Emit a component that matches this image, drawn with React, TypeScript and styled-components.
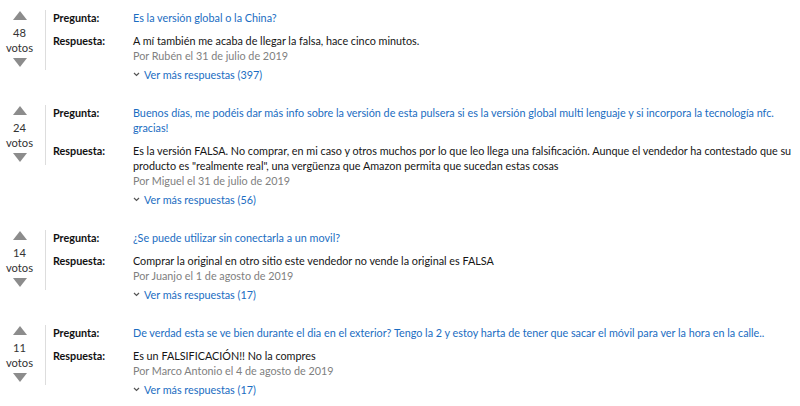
import * as React from 'react'
import styled, { createGlobalStyle } from 'styled-components'

interface Entry {
  votes: number
  question: string
  answer: string
  author: string
  date: string
  more: number
}

const entries: Entry[] = [
  {
    votes: 48,
    question: 'Es la versión global o la China?',
    answer: 'A mí también me acaba de llegar la falsa, hace cinco minutos.',
    author: 'Rubén',
    date: '31 de julio de 2019',
    more: 397,
  },
  {
    votes: 24,
    question:
      'Buenos días, me podéis dar más info sobre la versión de esta pulsera si es la versión global multi lenguaje y si incorpora la tecnología nfc. gracias!',
    answer:
      'Es la versión FALSA. No comprar, en mi caso y otros muchos por lo que leo llega una falsificación. Aunque el vendedor ha contestado que su producto es "realmente real", una vergüenza que Amazon permita que sucedan estas cosas',
    author: 'Miguel',
    date: '31 de julio de 2019',
    more: 56,
  },
  {
    votes: 14,
    question: '¿Se puede utilizar sin conectarla a un movil?',
    answer: 'Comprar la original en otro sitio este vendedor no vende la original es FALSA',
    author: 'Juanjo',
    date: '1 de agosto de 2019',
    more: 17,
  },
  {
    votes: 11,
    question:
      'De verdad esta se ve bien durante el dia en el exterior? Tengo la 2 y estoy harta de tener que sacar el móvil para ver la hora en la calle..',
    answer: 'Es un FALSIFICACIÓN!! No la compres',
    author: 'Marco Antonio',
    date: '4 de agosto de 2019',
    more: 17,
  },
]

const GlobalStyle = createGlobalStyle`
  body {
    margin: 0;
    background: #fff;
    font-family: Lato, 'Open Sans', Arial, sans-serif;
    font-size: 10.8px;
    color: #111;
  }
`

const Page = styled.div`
  padding: 10px 5px 0 4px;
`

const Row = styled.div`
  display: flex;
  align-items: flex-start;
  margin-bottom: 23px;
`

const Votes = styled.div`
  width: 31px;
  height: 59px;
  padding: 1px 10px 0 0;
  border-right: 1px solid #ddd;
  display: flex;
  flex-direction: column;
  align-items: center;
  flex-shrink: 0;
  font-size: 11.2px;
`

const Arrow = styled.div<{ $down?: boolean }>`
  width: 0;
  height: 0;
  border-left: 7px solid transparent;
  border-right: 7px solid transparent;
  ${p => (p.$down ? 'border-top: 9px solid #8c8c8c;' : 'border-bottom: 9px solid #8c8c8c;')}
  margin: ${p => (p.$down ? '3px 0 0' : '0 0 5px')};
`

const Count = styled.span`
  line-height: 15px;
  color: #333;
`

const Body = styled.div`
  flex: 1;
  padding-left: 7px;
  display: grid;
  grid-template-columns: 80px 1fr;
  row-gap: 8px;
  line-height: 15px;
`

const Label = styled.span`
  font-weight: 700;
  color: #111;
`

const QuestionLink = styled.a`
  color: #1a6dc2;
  text-decoration: none;
`

const Answer = styled.div`
  color: #151515;
`

const Meta = styled.div`
  color: #808080;
`

const More = styled.a`
  display: inline-flex;
  align-items: center;
  gap: 4px;
  margin-top: 4px;
  color: #1a6dc2;
  text-decoration: none;
`

const Chevron = () => (
  <svg width="7" height="5" viewBox="0 0 7 5">
    <path d="M1 1l2.5 2.5L6 1" fill="none" stroke="#555" strokeWidth="1.2" />
  </svg>
)

const App: React.FC = () => (
  <Page>
    <GlobalStyle />
    {entries.map((e, i) => (
      <Row key={i}>
        <Votes>
          <Arrow />
          <Count>{e.votes}</Count>
          <Count>votos</Count>
          <Arrow $down />
        </Votes>
        <Body>
          <Label>Pregunta:</Label>
          <QuestionLink href="#">{e.question}</QuestionLink>
          <Label>Respuesta:</Label>
          <div>
            <Answer>{e.answer}</Answer>
            <Meta>
              Por {e.author} el {e.date}
            </Meta>
            <More href="#">
              <Chevron />
              Ver más respuestas ({e.more})
            </More>
          </div>
        </Body>
      </Row>
    ))}
  </Page>
)

export default App
